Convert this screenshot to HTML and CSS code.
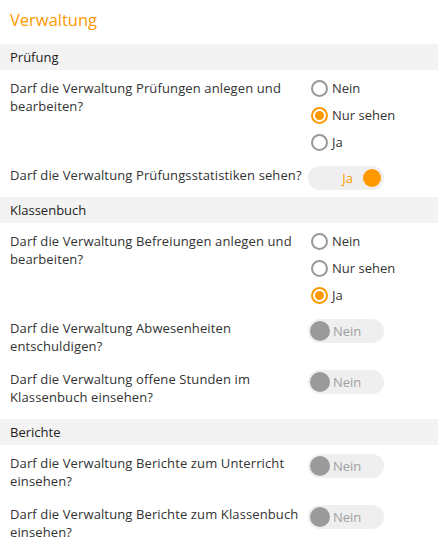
FILE: index.html
```html
<!DOCTYPE html>
<html lang="de">
<head>
<meta charset="utf-8">
<title>Verwaltung</title>
<link rel="stylesheet" href="styles.css">
</head>
<body>
<div class="page">
  <h1 class="title">Verwaltung</h1>

  <div class="section">Prüfung</div>
  <div class="group">
    <div class="row">
      <div class="question">Darf die Verwaltung Prüfungen anlegen und bearbeiten?</div>
      <div class="radios">
        <div class="radio"><span class="circle"></span><span class="label">Nein</span></div>
        <div class="radio checked"><span class="circle"></span><span class="label">Nur sehen</span></div>
        <div class="radio"><span class="circle"></span><span class="label">Ja</span></div>
      </div>
    </div>
    <div class="row">
      <div class="question">Darf die Verwaltung Prüfungsstatistiken sehen?</div>
      <div class="toggle on"><span class="ttext">Ja</span><span class="knob"></span></div>
    </div>
  </div>

  <div class="section">Klassenbuch</div>
  <div class="group">
    <div class="row">
      <div class="question">Darf die Verwaltung Befreiungen anlegen und bearbeiten?</div>
      <div class="radios">
        <div class="radio"><span class="circle"></span><span class="label">Nein</span></div>
        <div class="radio"><span class="circle"></span><span class="label">Nur sehen</span></div>
        <div class="radio checked"><span class="circle"></span><span class="label">Ja</span></div>
      </div>
    </div>
    <div class="row">
      <div class="question">Darf die Verwaltung Abwesenheiten entschuldigen?</div>
      <div class="toggle off"><span class="knob"></span><span class="ttext">Nein</span></div>
    </div>
    <div class="row">
      <div class="question">Darf die Verwaltung offene Stunden im Klassenbuch einsehen?</div>
      <div class="toggle off"><span class="knob"></span><span class="ttext">Nein</span></div>
    </div>
  </div>

  <div class="section">Berichte</div>
  <div class="group">
    <div class="row">
      <div class="question">Darf die Verwaltung Berichte zum Unterricht einsehen?</div>
      <div class="toggle off"><span class="knob"></span><span class="ttext">Nein</span></div>
    </div>
    <div class="row">
      <div class="question">Darf die Verwaltung Berichte zum Klassenbuch einsehen?</div>
      <div class="toggle off"><span class="knob"></span><span class="ttext">Nein</span></div>
    </div>
  </div>
</div>
</body>
</html>
```
FILE: styles.css
```css
html, body {
  margin: 0;
  padding: 0;
  background: #ffffff;
}
body {
  font-family: "Open Sans", "Noto Sans", sans-serif;
  font-size: 13px;
  color: #333333;
}
.page {
  width: 438px;
}
.title {
  margin: 0;
  padding: 8px 10px 12px;
  font-size: 16.5px;
  line-height: 24px;
  font-weight: 400;
  color: #ff9900;
}
.section {
  background: #f3f3f3;
  height: 26px;
  line-height: 26px;
  padding: 0 10px;
  font-size: 13px;
  color: #222222;
}
.group {
  padding-bottom: 7px;
}
.row {
  display: grid;
  grid-template-columns: 295px 1fr;
  column-gap: 3px;
  padding: 9px 10px 6px;
  align-items: start;
}
.question {
  line-height: 18px;
  letter-spacing: 0.12px;
}
.radios {
  display: flex;
  flex-direction: column;
  gap: 9px;
  padding-left: 3px;
}
.radio {
  display: flex;
  align-items: center;
  gap: 4px;
  height: 18px;
}
.circle {
  box-sizing: border-box;
  width: 17px;
  height: 17px;
  border: 2px solid #999999;
  border-radius: 50%;
  display: flex;
  align-items: center;
  justify-content: center;
}
.radio.checked .circle {
  border-color: #ff9900;
}
.radio.checked .circle::after {
  content: "";
  width: 9px;
  height: 9px;
  border-radius: 50%;
  background: #ff9900;
}
.toggle {
  box-sizing: border-box;
  width: 76px;
  height: 24px;
  margin-bottom: -6px;
  border-radius: 12px;
  background: #efefef;
  display: flex;
  align-items: center;
  padding: 0 3px;
}
.knob {
  width: 18px;
  height: 18px;
  border-radius: 50%;
}
.toggle.on .knob {
  background: #ff9900;
}
.toggle.on .ttext {
  flex: 1;
  padding-left: 21px;
  text-align: center;
  color: #ff9900;
}
.toggle.off {
  padding-left: 2px;
}
.toggle.off .knob {
  width: 20px;
  height: 20px;
  background: #9a9a9a;
}
.toggle.off .ttext {
  margin-left: 3px;
  color: #a0a0a0;
}
```
